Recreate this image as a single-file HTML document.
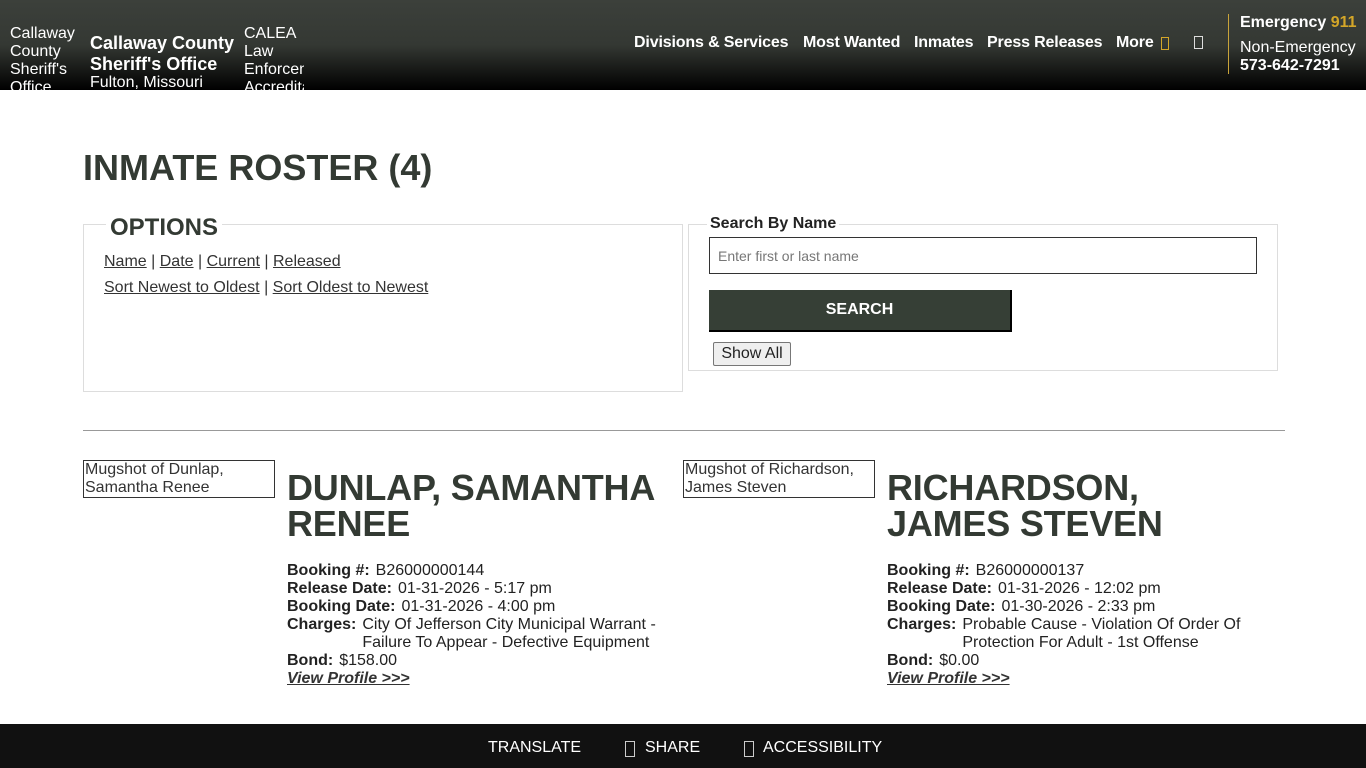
<!DOCTYPE html>
<html><head><meta charset="utf-8"><style>
*{margin:0;padding:0;box-sizing:border-box}
body{width:1366px;height:768px;overflow:hidden;font-family:"Liberation Sans",sans-serif;background:#fff;position:relative;color:#222}
.a{position:absolute;white-space:nowrap}
header{position:absolute;left:0;top:0;width:1366px;height:90px;background:linear-gradient(#3c403b 0%,#343833 50%,#000 100%);color:#fff;overflow:hidden}
.nav{font-weight:bold;font-size:16px;letter-spacing:-0.15px;top:34px}
.box{position:absolute;border:1px solid #ddd}
a{color:#333;text-decoration:underline}
h2{font-size:36px;color:#333a33;line-height:36px;position:absolute;font-weight:bold;letter-spacing:-0.2px}
.d{position:absolute;font-size:16px;line-height:18px;color:#222}
.d b{color:#222}
.rw{display:flex}
.rw b{margin-right:6px;white-space:nowrap}
.mug{position:absolute;border:1px solid #333;width:192px;height:38px;font-size:16px;line-height:18px;padding-left:1px;color:#333}
</style></head><body>
<header>
<div class="a" style="left:10px;top:25px;font-size:16px;line-height:18px;white-space:normal;width:70px">Callaway County Sheriff's Office</div>
<div class="a" style="left:90px;top:33px;font-size:18px;font-weight:bold;line-height:21px">Callaway County<br>Sheriff's Office</div>
<div class="a" style="left:90px;top:74px;font-size:16px">Fulton, Missouri</div>
<div class="a" style="left:244px;top:25px;font-size:16px;line-height:18px;width:60px;overflow:hidden">CALEA<br>Law<br>Enforcement<br>Accreditation</div>
<div class="a nav" style="left:634px">Divisions &amp; Services</div>
<div class="a nav" style="left:803px">Most Wanted</div>
<div class="a nav" style="left:914px">Inmates</div>
<div class="a nav" style="left:987px">Press Releases</div>
<div class="a nav" style="left:1116px">More</div>
<div class="a" style="left:1161px;top:37px;width:8px;height:13px;border:1px solid #d4a628"></div>
<div class="a" style="left:1194px;top:36px;width:9px;height:13px;border:1px solid #ddd"></div>
<div class="a" style="left:1228px;top:14px;width:1px;height:60px;background:#c9a43a"></div>
<div class="a" style="left:1240px;top:14px;font-size:16px;font-weight:bold">Emergency <span style="color:#d4a628">911</span></div>
<div class="a" style="left:1240px;top:39px;font-size:16px">Non-Emergency</div>
<div class="a" style="left:1240px;top:57px;font-size:16px;font-weight:bold">573-642-7291</div>
</header>
<div class="a" style="left:83px;top:147px;font-size:36px;font-weight:bold;color:#333a33">INMATE ROSTER (4)</div>
<div class="box" style="left:83px;top:224px;width:600px;height:168px"></div>
<div class="a" style="left:106px;top:214px;font-size:24px;font-weight:bold;color:#333a33;background:#fff;padding:0 4px">OPTIONS</div>
<div class="a" style="left:104px;top:253px;font-size:16px;color:#333"><a>Name</a> | <a>Date</a> | <a>Current</a> | <a>Released</a></div>
<div class="a" style="left:104px;top:279px;font-size:16px;color:#333"><a>Sort Newest to Oldest</a> | <a>Sort Oldest to Newest</a></div>
<div class="box" style="left:688px;top:224px;width:590px;height:147px"></div>
<div class="a" style="left:707px;top:215px;font-size:16px;font-weight:bold;background:#fff;padding:0 3px">Search By Name</div>
<div class="a" style="left:709px;top:237px;width:548px;height:37px;border:1px solid #333;background:#fff;font-size:14px;color:#777;padding:10px 8px">Enter first or last name</div>
<div class="a" style="left:709px;top:290px;width:303px;height:42px;background:#363f36;border-bottom:2px solid #000;border-right:2px solid #000;color:#fff;font-weight:bold;font-size:16px;text-align:center;line-height:40px">SEARCH</div>
<div class="a" style="left:713px;top:342px;width:78px;height:24px;background:#efefef;border:1px solid #777;border-radius:2px;font-size:16px;text-align:center;line-height:22px">Show All</div>
<div class="a" style="left:83px;top:430px;width:1202px;height:1px;background:#999"></div>

<div class="mug" style="left:83px;top:460px">Mugshot of Dunlap, Samantha Renee</div>
<h2 style="left:287px;top:470px">DUNLAP, SAMANTHA<br>RENEE</h2>
<div class="d" style="left:287px;top:562px;width:380px">
<div class="rw"><b>Booking #:</b>B26000000144</div>
<div class="rw"><b>Release Date:</b>01-31-2026 - 5:17 pm</div>
<div class="rw"><b>Booking Date:</b>01-31-2026 - 4:00 pm</div>
<div class="rw"><b>Charges:</b><span>City Of Jefferson City Municipal Warrant - Failure To Appear - Defective Equipment</span></div>
<div class="rw"><b>Bond:</b>$158.00</div>
<div><a style="font-weight:bold;font-style:italic">View Profile &gt;&gt;&gt;</a></div>
</div>

<div class="mug" style="left:683px;top:460px">Mugshot of Richardson, James Steven</div>
<h2 style="left:887px;top:470px">RICHARDSON,<br>JAMES STEVEN</h2>
<div class="d" style="left:887px;top:562px;width:380px">
<div class="rw"><b>Booking #:</b>B26000000137</div>
<div class="rw"><b>Release Date:</b>01-31-2026 - 12:02 pm</div>
<div class="rw"><b>Booking Date:</b>01-30-2026 - 2:33 pm</div>
<div class="rw"><b>Charges:</b><span>Probable Cause - Violation Of Order Of Protection For Adult - 1st Offense</span></div>
<div class="rw"><b>Bond:</b>$0.00</div>
<div><a style="font-weight:bold;font-style:italic">View Profile &gt;&gt;&gt;</a></div>
</div>

<div class="a" style="left:0;top:724px;width:1366px;height:44px;background:#111"></div>
<div class="a" style="left:488px;top:739px;font-size:16px;color:#fff">TRANSLATE</div>
<div class="a" style="left:625px;top:741px;width:10px;height:16px;border:1px solid #ccc"></div>
<div class="a" style="left:645px;top:739px;font-size:16px;color:#fff">SHARE</div>
<div class="a" style="left:744px;top:741px;width:10px;height:16px;border:1px solid #ccc"></div>
<div class="a" style="left:763px;top:739px;font-size:16px;color:#fff">ACCESSIBILITY</div>
</body></html>
